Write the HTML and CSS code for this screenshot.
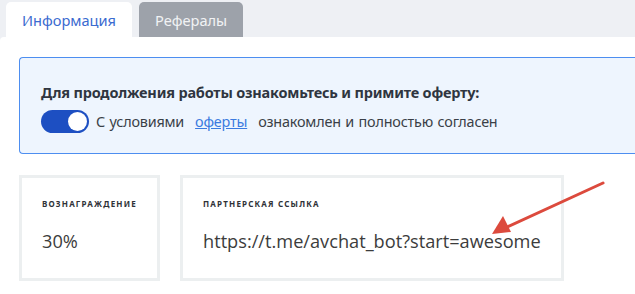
FILE: index.html
```html
<!DOCTYPE html>
<html lang="ru">
<head>
    <meta charset="UTF-8">
    <meta name="viewport" content="width=device-width, initial-scale=1.0">
    <title>Партнерская программа</title>
    <link rel="stylesheet" href="styles.css">
</head>
<body>
    <div class="tabs">
        <div class="tab active">Информация</div>
        <div class="tab">Рефералы</div>
    </div>

    <div class="panel">
        <div class="offer">
            <p class="offer-title">Для продолжения работы ознакомьтесь и примите оферту:</p>
            <label class="offer-check">
                <span class="switch"><span class="knob"></span></span>
                С условиями <a href="#">оферты</a> ознакомлен и полностью согласен
            </label>
        </div>

        <div class="cards">
            <div class="card small">
                <div class="card-label">Вознаграждение</div>
                <div class="card-value">30%</div>
            </div>
            <div class="card wide">
                <div class="card-label">Партнерская ссылка</div>
                <div class="card-value">https://t.me/avchat_bot?start=awesome</div>
            </div>
        </div>
    </div>

    <svg class="arrow" width="635" height="294" viewBox="0 0 635 294">
        <line x1="603" y1="183" x2="505" y2="228" stroke="#dc4a3d" stroke-width="3" stroke-linecap="round"/>
        <polygon points="492,234 503,216 511,232" fill="#dc4a3d"/>
    </svg>
</body>
</html>
```

FILE: styles.css
```css
body {
    margin: 0;
    background-color: #eef0f4;
    font-family: "Noto Sans", Arial, sans-serif;
    overflow: hidden;
    height: 294px;
}

.tabs {
    display: flex;
    gap: 7px;
    padding: 2px 0 0 6px;
}

.tab {
    height: 35px;
    padding: 0 16px;
    display: flex;
    align-items: center;
    font-size: 14.6px;
    color: #f1f2f4;
    background: #9da2aa;
    border-radius: 5px 5px 0 0;
}

.tab.active {
    background: #ffffff;
    color: #3b6bd0;
}

.panel {
    background: #ffffff;
    border-radius: 4px 0 0 0;
    padding: 20px 0 14px 19px;
}

.offer {
    background: #eef5fe;
    border: 1px solid #4d8ef0;
    border-right: none;
    border-radius: 4px 0 0 4px;
    height: 95px;
    padding: 0 0 0 21px;
}

.offer-title {
    margin: 24px 0 0 0;
    font-size: 14.5px;
    font-weight: bold;
    color: #2f3540;
    letter-spacing: -0.2px;
}

.offer-check {
    display: flex;
    align-items: center;
    gap: 7px;
    margin-top: 8px;
    font-size: 14.4px;
    color: #3a3f47;
    letter-spacing: -0.2px;
    word-spacing: 1px;
}

.offer-check a {
    color: #3b7be0;
    margin: 0 4px;
}

.switch {
    width: 48px;
    height: 23px;
    background: #1d4fc2;
    border-radius: 12px;
    display: flex;
    align-items: center;
    justify-content: flex-end;
    padding-right: 2px;
    box-sizing: border-box;
}

.knob {
    width: 19px;
    height: 19px;
    border-radius: 50%;
    background: #ffffff;
}

.cards {
    display: flex;
    gap: 20px;
    margin-top: 21px;
}

.card {
    border: 3px solid #eceff0;
    height: 100px;
    padding: 0 20px;
}

.card.small {
    width: 95px;
}

.card.wide {
    width: 338px;
}

.card-label {
    margin-top: 20px;
    font-size: 8px;
    font-weight: bold;
    text-transform: uppercase;
    letter-spacing: 1.2px;
    color: #2f3237;
}

.card-value {
    margin-top: 20px;
    font-family: "Open Sans", sans-serif;
    font-size: 18.2px;
    color: #3c3c3c;
}

.arrow {
    position: absolute;
    left: 0;
    top: 0;
    pointer-events: none;
}
```
